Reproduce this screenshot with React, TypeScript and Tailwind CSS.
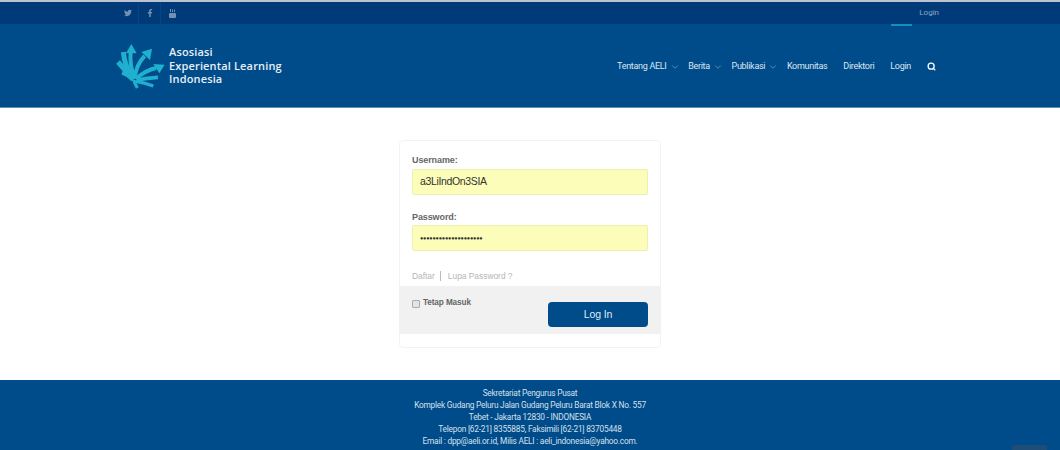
import { Search, ChevronDown } from "lucide-react";
import { FaTwitter, FaFacebookF } from "react-icons/fa";

function Logo() {
  const shafts: [string, number][] = [
    ["M50 28 Q46 70 62 110", 12],
    ["M92 42 Q66 68 62 110", 12],
    ["M126 78 Q95 85 66 110", 12],
    ["M132 106 Q100 108 68 114", 11],
    ["M28 30 Q32 75 58 110", 15],
    ["M12 60 Q35 85 56 112", 15],
    ["M24 92 Q42 98 58 114", 11],
    ["M60 114 Q62 125 70 138", 10],
    ["M66 118 Q90 122 118 132", 10],
  ];
  return (
    <svg width="52" height="48" viewBox="0 0 156 144" fill="#1fb0cf" className="shrink-0">
      {shafts.map(([d, w], i) => (
        <path key={i} d={d} fill="none" stroke="#1fb0cf" strokeWidth={w} />
      ))}
      <path d="M52 6 L68 34 L36 34 Z" />
      <path d="M114 20 L108 54 L82 30 Z" />
      <path d="M152 68 L136 94 L118 66 Z" />
    </svg>
  );
}

function YoutubeOld() {
  return (
    <svg width="7" height="9" viewBox="0 0 14 18" fill="currentColor">
      <rect x="0" y="8" width="14" height="10" rx="2" />
      <path d="M2 0 H4 V6 H2 Z M6 1 H8 V6 H6 Z M10 1 H12 V6 H10 Z" />
    </svg>
  );
}

function SocialCell({ children, last }: { children: React.ReactNode; last?: boolean }) {
  return (
    <span className={last ? "w-[22px] h-full flex items-center justify-center" : "w-[22px] h-full flex items-center justify-center border-r border-[#0a4580]"}>
      {children}
    </span>
  );
}

function NavItem({ label, caret }: { label: string; caret?: boolean }) {
  return (
    <span className="flex items-center">
      <span>{label}</span>
      {caret && <ChevronDown size={10} strokeWidth={1.6} className="ml-[3px] -mr-[7.33px] text-[#7fa9cc]" />}
    </span>
  );
}

export default function App() {
  return (
    <div className="relative w-[1060px] h-[450px] overflow-hidden bg-white flex flex-col font-['Liberation_Sans',sans-serif]">
      <div className="h-[24px] bg-[#003a78] border-t-2 border-[#b9c4d2] flex items-center justify-between pl-[117px] pr-[121px]">
        <div className="h-full flex items-center text-[#7391b2] text-[8px]">
          <SocialCell><FaTwitter /></SocialCell>
          <SocialCell><FaFacebookF /></SocialCell>
          <SocialCell last><YoutubeOld /></SocialCell>
        </div>
        <div className="relative h-full flex items-center font-['Roboto',sans-serif] text-[8px] text-[#8fa9c6]">
          Login
          <span className="absolute top-[22px] right-[27px] w-[21px] h-[2px] bg-[#0f8fc4]" />
        </div>
      </div>
      <div className="h-[84px] bg-[#004b8a] border-b border-[#5a92b4] flex items-center justify-between pl-[114px] pr-[124px]">
        <div className="flex items-center gap-[3px]">
          <Logo />
          <div className="font-['Open_Sans',sans-serif] font-semibold text-[11px] leading-[13.5px] text-[#e6eff6] tracking-[0.15px]">
            <div>Asosiasi</div>
            <div>Experiental Learning</div>
            <div>Indonesia</div>
          </div>
        </div>
        <div className="mt-[2px] flex items-center gap-[16px] font-['Roboto',sans-serif] text-[9px] tracking-[-0.3px] text-[#dbe7f1]">
          <NavItem label="Tentang AELI" caret />
          <NavItem label="Berita" caret />
          <NavItem label="Publikasi" caret />
          <NavItem label="Komunitas" />
          <NavItem label="Direktori" />
          <NavItem label="Login" />
          <Search size={9} strokeWidth={3.5} className="text-white" />
        </div>
      </div>
      <div className="flex-1 flex justify-center pt-[32px]">
        <div className="w-[262px] h-[208px] bg-white border border-[#f3f3f3] rounded-[4px] flex flex-col">
          <div className="px-[12px] pt-[13px] flex-1 flex flex-col">
            <div className="text-[9px] tracking-[-0.1px] leading-[12px] font-bold text-[#666666]">Username:</div>
            <div className="mt-[3px] h-[26px] bg-[#fbfdb8] border border-[#eef0b0] rounded-[2px] flex items-center px-[7px] text-[10.5px] tracking-[-0.35px] text-[#333333]">
              a3LiIndOn3SIA
            </div>
            <div className="mt-[16px] text-[9px] tracking-[-0.1px] leading-[12px] font-bold text-[#666666]">Password:</div>
            <div className="mt-[2px] h-[26px] bg-[#fbfdb8] border border-[#eef0b0] rounded-[2px] flex items-center px-[7px] text-[5.5px] tracking-[-0.2px] text-[#333333]">
              ●●●●●●●●●●●●●●●●●●●●
            </div>
            <div className="mt-[20px] h-[10px] flex items-center text-[8.4px] text-[#b5b5b5]">
              <span>Daftar</span>
              <span className="mx-[5px] w-px h-[10px] bg-[#bbbbbb]" />
              <span className="ml-[2px]">Lupa Password ?</span>
            </div>
          </div>
          <div className="h-[48px] mb-[13px] mx-[-1px] bg-[#f1f1f1] px-[13px] flex items-start justify-between">
            <div className="flex items-start gap-[3px] pt-[11px]">
              <span className="mt-[3px] w-[8px] h-[8px] bg-[#e4e4e4] border border-[#aaaaaa] rounded-[1px]" />
              <span className="text-[8.2px] tracking-[-0.1px] leading-[11px] font-bold text-[#666666]">Tetap Masuk</span>
            </div>
            <div className="mt-[16px] w-[100px] h-[25px] rounded-[4px] bg-[#004b8a] text-[#dfeaf3] text-[10.5px] tracking-[-0.1px] flex items-center justify-center">
              Log In
            </div>
          </div>
        </div>
      </div>
      <div className="h-[70px] bg-[#004b8a] pt-[7px] text-center font-['Roboto',sans-serif] text-[8.3px] tracking-[-0.22px] leading-[12px] text-[#d3e0ec]">
        <div>Sekretariat Pengurus Pusat</div>
        <div>Komplek Gudang Peluru Jalan Gudang Peluru Barat Blok X No. 557</div>
        <div>Tebet - Jakarta 12830 - INDONESIA</div>
        <div>Telepon [62-21] 8355885, Faksimili [62-21] 83705448</div>
        <div>Email : dpp@aeli.or.id, Milis AELI : aeli_indonesia@yahoo.com.</div>
      </div>
      <span className="absolute left-[1012px] top-[445px] w-[35px] h-[5px] bg-[#1f4d78] rounded-t-[2px]" />
    </div>
  );
}
